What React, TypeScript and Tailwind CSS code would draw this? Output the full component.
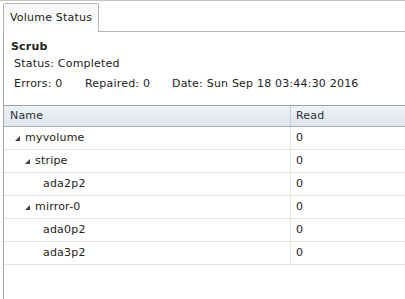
import React from "react";

type Row = { name: string; depth: number; expandable: boolean; read: number };

const rows: Row[] = [
  { name: "myvolume", depth: 0, expandable: true, read: 0 },
  { name: "stripe", depth: 1, expandable: true, read: 0 },
  { name: "ada2p2", depth: 2, expandable: false, read: 0 },
  { name: "mirror-0", depth: 1, expandable: true, read: 0 },
  { name: "ada0p2", depth: 2, expandable: false, read: 0 },
  { name: "ada3p2", depth: 2, expandable: false, read: 0 },
];

const indent = ["pl-[10px]", "pl-[20px]", "pl-[39px]"];

function Arrow() {
  return (
    <svg width="7" height="7" viewBox="0 0 7 7" className="mr-[4px] shrink-0">
      <path d="M6 1 L6 6 L1 6 Z" fill="#404040" />
    </svg>
  );
}

export default function App() {
  return (
    <div className="h-[299px] w-[405px] overflow-hidden bg-white text-[11px] tracking-[0.2px] text-[#222] font-['DejaVu_Sans',sans-serif]">
      {/* Tab strip */}
      <div className="flex h-[32px] items-end border-t border-[#c4c4c4] pl-[3px]">
        <div className="flex h-[29px] w-[96px] items-center rounded-t-[2px] border border-b-0 border-[#b4b4b4] bg-gradient-to-b from-[#f6f6f6] to-white pl-[6px]">
          Volume Status
        </div>
        <div className="flex-1 self-stretch border-b border-[#b4b4b4]" />
      </div>

      {/* Panel */}
      <div className="ml-[3px] flex h-[267px] flex-col border-l border-[#a8a8a8]">
        <div className="px-[7px] pt-[8px]">
          <div className="font-bold leading-[14px]">Scrub</div>
          <div className="mt-[3px] pl-[3px] leading-[14px]">Status: Completed</div>
          <div className="mt-[6px] flex pl-[3px] leading-[14px]">
            <span className="w-[71px]">Errors: 0</span>
            <span className="w-[87px]">Repaired: 0</span>
            <span>Date: Sun Sep 18 03:44:30 2016</span>
          </div>
        </div>

        {/* Grid */}
        <div className="mt-[14px] flex-1 border-t border-[#a0a0a0]">
          <div className="flex h-[21px] items-center border-b border-[#a8b0bb] bg-gradient-to-b from-[#eef2f6] to-[#dfe6ee] text-[#2a2f38]">
            <div className="w-[287px] border-r border-[#c8cdd4] pl-[6px] leading-[20px]">Name</div>
            <div className="pl-[5px]">Read</div>
          </div>
          {rows.map((r) => (
            <div key={r.name} className="flex h-[23px] border-b border-[#ebe3d8]">
              <div className={`flex w-[287px] items-center border-r border-[#ebe3d8] ${indent[r.depth]}`}>
                {r.expandable && <Arrow />}
                <span>{r.name}</span>
              </div>
              <div className="flex items-center pl-[5px]">{r.read}</div>
            </div>
          ))}
        </div>
      </div>
    </div>
  );
}
